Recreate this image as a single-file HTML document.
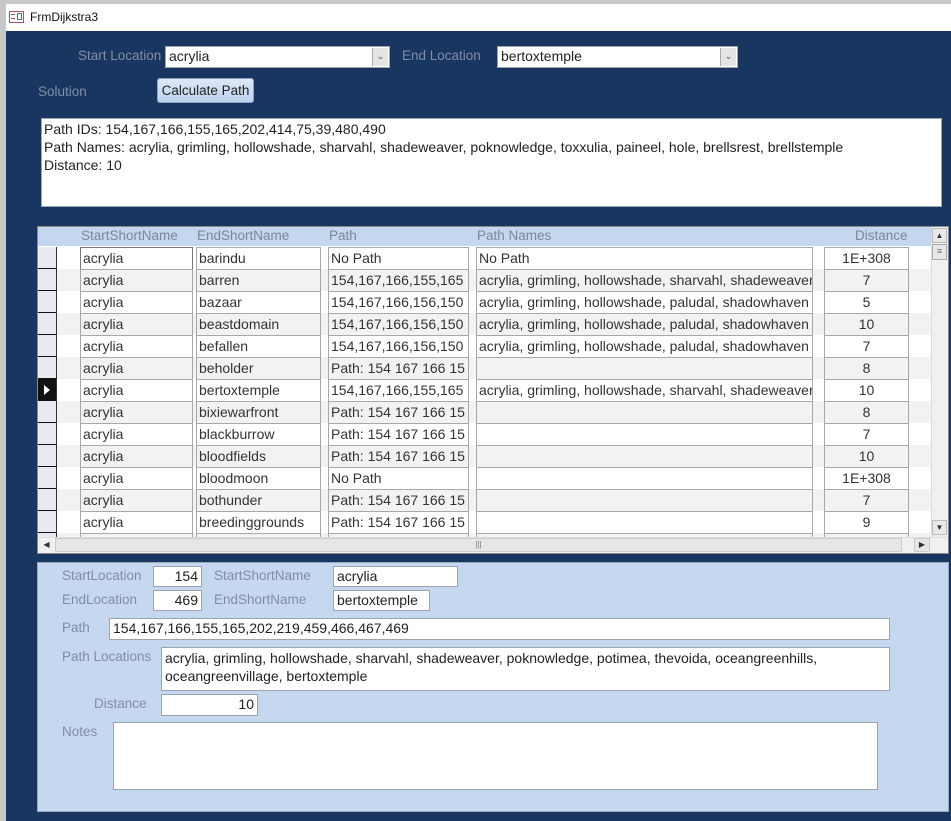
<!DOCTYPE html>
<html><head><meta charset="utf-8"><style>
*{box-sizing:border-box;margin:0;padding:0}
body{width:951px;height:821px;overflow:hidden;background:#c8c8c8;font-family:"Liberation Sans",sans-serif;font-size:12px;color:#222;position:relative}
.a{position:absolute}
.lbl{position:absolute;color:#7f8ea8;font-size:13.5px;white-space:nowrap}
.lbl2{position:absolute;color:#7d8797;font-size:13.5px;white-space:nowrap}
.box{position:absolute;background:#fff;border:1px solid #9aa3ae;padding:0 3px;line-height:19px;white-space:nowrap;overflow:hidden;font-size:14px}
.dd{position:absolute;top:1px;right:1px;bottom:1px;width:16px;background:#e4e4e4;border-left:1px solid #aaa;text-align:center;font-size:9px;color:#555;line-height:17px}
.cell{position:absolute;height:23px;border:1px solid #a8a8a8;padding:0 2px;line-height:20px;white-space:nowrap;overflow:hidden;font-size:14px;color:#333}
</style></head><body>
<div class="a" style="left:6px;top:4px;width:945px;height:27px;background:#fff"></div>
<div class="a" style="left:9px;top:11px;width:15px;height:12px;border:1px solid #b04c74;background:#fff"></div>
<div class="a" style="left:11px;top:14px;width:4px;height:1px;background:#b04c74"></div>
<div class="a" style="left:11px;top:18px;width:4px;height:1px;background:#b04c74"></div>
<div class="a" style="left:17px;top:13px;width:5px;height:7px;border:1px solid #4a6fb0"></div>
<div class="a" style="left:30px;top:10px;font-size:12px;color:#111">FrmDijkstra3</div>
<div class="a" style="left:6px;top:31px;width:945px;height:790px;background:#193660"></div>

<div class="lbl" style="left:78px;top:48px">Start Location</div>
<div class="box" style="left:165px;top:46px;width:225px;height:22px">acrylia<div class="dd">&#8964;</div></div>
<div class="lbl" style="left:402px;top:48px">End Location</div>
<div class="box" style="left:497px;top:46px;width:241px;height:22px">bertoxtemple<div class="dd">&#8964;</div></div>
<div class="lbl" style="left:38px;top:84px">Solution</div>
<div class="a" style="left:157px;top:78px;width:97px;height:25px;background:linear-gradient(#dce8f7,#bfd3ee);border:1px solid #8ba5c9;border-radius:3px;font-size:13.5px;color:#222;text-align:center;line-height:23px">Calculate Path</div>

<div class="a" style="left:41px;top:118px;width:901px;height:89px;background:#fff;border:1px solid #9aa;padding:1px 2px;font-size:14px;line-height:18px;color:#222">Path IDs: 154,167,166,155,165,202,414,75,39,480,490<br>Path Names: acrylia, grimling, hollowshade, sharvahl, shadeweaver, poknowledge, toxxulia, paineel, hole, brellsrest, brellstemple<br>Distance: 10</div>

<div class="a" style="left:37px;top:226px;width:912px;height:328px;background:#fff;border:1px solid #888"></div>
<div class="a" style="left:38px;top:227px;width:893px;height:19px;background:#c4d7ee"></div>
<div class="lbl2" style="left:81px;top:228px">StartShortName</div>
<div class="lbl2" style="left:197px;top:228px">EndShortName</div>
<div class="lbl2" style="left:329px;top:228px">Path</div>
<div class="lbl2" style="left:477px;top:228px">Path Names</div>
<div class="lbl2" style="left:855px;top:228px">Distance</div>

<div id="rows"></div>
<script>
var d=[["barindu","No Path","No Path","1E+308"],["barren","154,167,166,155,165","acrylia, grimling, hollowshade, sharvahl, shadeweaver","7"],["bazaar","154,167,166,156,150","acrylia, grimling, hollowshade, paludal, shadowhaven","5"],["beastdomain","154,167,166,156,150","acrylia, grimling, hollowshade, paludal, shadowhaven","10"],["befallen","154,167,166,156,150","acrylia, grimling, hollowshade, paludal, shadowhaven","7"],["beholder","Path: 154 167 166 15","","8"],["bertoxtemple","154,167,166,155,165","acrylia, grimling, hollowshade, sharvahl, shadeweaver","10"],["bixiewarfront","Path: 154 167 166 15","","8"],["blackburrow","Path: 154 167 166 15","","7"],["bloodfields","Path: 154 167 166 15","","10"],["bloodmoon","No Path","","1E+308"],["bothunder","Path: 154 167 166 15","","7"],["breedinggrounds","Path: 154 167 166 15","","9"],["","","",""]];
var h2="";
for(var i=0;i<14;i++){var y=247+i*22;var bg=(i%2==1)?"#f2f2f2":"#fff";var ht=i==13?(537-y):22;
h2+='<div class="a" style="left:38px;top:'+y+'px;width:893px;height:'+ht+'px;background:'+bg+';overflow:hidden">';
h2+='<div class="a" style="left:0;top:0;width:19px;height:22px;background:'+(i==6?'#111':'#e8ebf0')+';border-bottom:1px solid #111;border-right:1px solid #333">'+(i==6?'<div class="a" style="left:6px;top:6px;width:0;height:0;border-left:6px solid #fff;border-top:5px solid transparent;border-bottom:5px solid transparent"></div>':'')+'</div>';
var r=d[i];
var cols=[[42,113,i==13?"":"acrylia"],[158,125,r[0]],[290,141,r[1]],[438,337,r[2]],[786,85,r[3]]];
for(var c=0;c<5;c++){var st=cols[c];h2+='<div class="cell" style="left:'+st[0]+'px;top:0;width:'+st[1]+'px;'+(c==4?'text-align:center;':'')+(i==0&&c==0?'border-color:#777;':'')+'">'+st[2]+'</div>';}
h2+='</div>';}
document.getElementById("rows").innerHTML=h2;
</script>

<div class="a" style="left:931px;top:227px;width:17px;height:310px;background:#f0f0f0;border-left:1px solid #ddd"></div>
<div class="a" style="left:932px;top:228px;width:15px;height:15px;background:#e8e8e8;border:1px solid #bbb;font-size:8px;text-align:center;line-height:13px;color:#333">&#9650;</div>
<div class="a" style="left:932px;top:244px;width:15px;height:16px;background:#e8e8e8;border:1px solid #aaa;font-size:9px;text-align:center;line-height:13px;color:#666">&#8801;</div>
<div class="a" style="left:932px;top:520px;width:15px;height:15px;background:#e8e8e8;border:1px solid #bbb;font-size:8px;text-align:center;line-height:13px;color:#333">&#9660;</div>
<div class="a" style="left:38px;top:537px;width:910px;height:16px;background:#f0f0f0;border-top:1px solid #ddd"></div>
<div class="a" style="left:39px;top:538px;width:15px;height:14px;font-size:8px;text-align:center;line-height:14px;color:#333">&#9664;</div>
<div class="a" style="left:55px;top:538px;width:847px;height:14px;background:#e6e6e6;border:1px solid #ccc;font-size:8px;text-align:center;line-height:12px;color:#777">|||</div>
<div class="a" style="left:914px;top:538px;width:16px;height:14px;background:#e6e6e6;border:1px solid #ccc;font-size:8px;text-align:center;line-height:12px;color:#333">&#9654;</div>

<div class="a" style="left:37px;top:562px;width:912px;height:250px;background:#c5d8ef;border:1px solid #9aa8ba"></div>
<div class="lbl" style="left:62px;top:568px">StartLocation</div>
<div class="box" style="left:153px;top:566px;width:49px;height:21px;text-align:right">154</div>
<div class="lbl" style="left:214px;top:568px">StartShortName</div>
<div class="box" style="left:333px;top:566px;width:125px;height:21px">acrylia</div>
<div class="lbl" style="left:62px;top:592px">EndLocation</div>
<div class="box" style="left:153px;top:590px;width:49px;height:21px;text-align:right">469</div>
<div class="lbl" style="left:214px;top:592px">EndShortName</div>
<div class="box" style="left:333px;top:590px;width:97px;height:21px">bertoxtemple</div>
<div class="lbl" style="left:62px;top:620px">Path</div>
<div class="box" style="left:109px;top:618px;width:781px;height:22px">154,167,166,155,165,202,219,459,466,467,469</div>
<div class="lbl" style="left:62px;top:649px">Path Locations</div>
<div class="box" style="left:161px;top:647px;width:729px;height:44px;line-height:18px;padding-top:1px;white-space:normal">acrylia, grimling, hollowshade, sharvahl, shadeweaver, poknowledge, potimea, thevoida, oceangreenhills, oceangreenvillage, bertoxtemple</div>
<div class="lbl" style="left:94px;top:696px">Distance</div>
<div class="box" style="left:161px;top:694px;width:97px;height:22px;text-align:right">10</div>
<div class="lbl" style="left:62px;top:724px">Notes</div>
<div class="a" style="left:113px;top:722px;width:765px;height:68px;background:#fff;border:1px solid #9aa3ae"></div>
</body></html>
